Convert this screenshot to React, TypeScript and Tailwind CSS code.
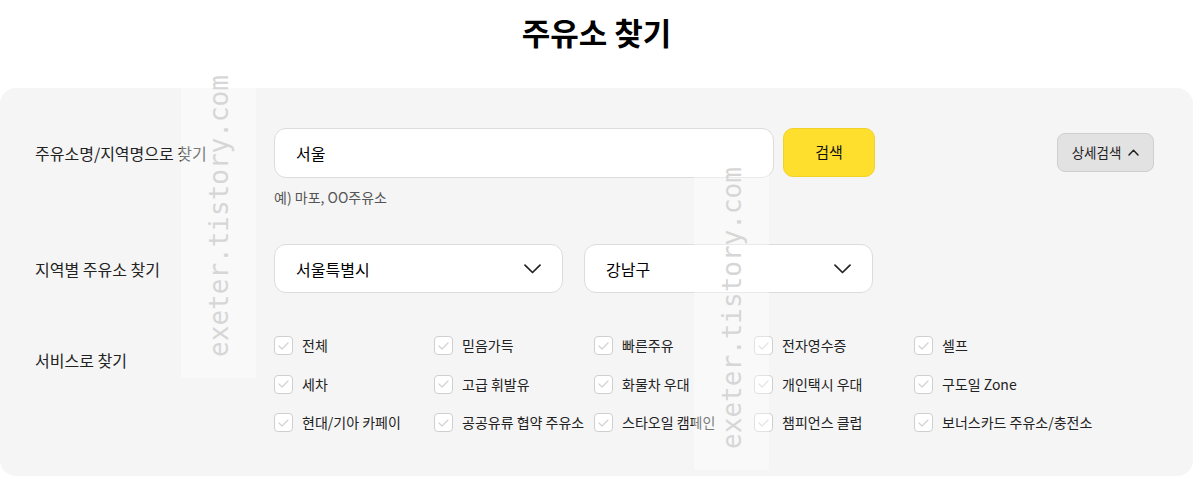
const services = [
  "전체",
  "믿음가득",
  "빠른주유",
  "전자영수증",
  "셀프",
  "세차",
  "고급 휘발유",
  "화물차 우대",
  "개인택시 우대",
  "구도일 Zone",
  "현대/기아 카페이",
  "공공유류 협약 주유소",
  "스타오일 캠페인",
  "챔피언스 클럽",
  "보너스카드 주유소/충전소",
]

function ChevronDown() {
  return (
    <svg width="17" height="10" viewBox="0 0 17 10" fill="none">
      <path d="M1 1.2 8.5 8.5 16 1.2" stroke="#222" strokeWidth="1.7" strokeLinecap="round" strokeLinejoin="round" />
    </svg>
  )
}

function Checkbox({ label }: { label: string }) {
  return (
    <label className="flex h-[19px] items-center gap-[9px]">
      <span className="flex h-[19px] w-[19px] shrink-0 items-center justify-center rounded-[4px] border border-[#cfcfcf] bg-white">
        <svg width="11" height="8" viewBox="0 0 11 8" fill="none">
          <path d="M1 4 4 7 10 1" stroke="#d2d2d2" strokeWidth="1.2" strokeLinecap="round" strokeLinejoin="round" />
        </svg>
      </span>
      <span className="whitespace-nowrap text-[14px] text-[#222]">{label}</span>
    </label>
  )
}

function Watermark({ className }: { className: string }) {
  return (
    <div
      className={`pointer-events-none absolute flex w-[75px] items-center justify-center bg-white/40 ${className}`}
    >
      <span className="-rotate-90 whitespace-nowrap font-['DejaVu_Sans_Mono',monospace] text-[26px] leading-none text-[#d6d6d6]">
        exeter.tistory.com
      </span>
    </div>
  )
}

export default function App() {
  return (
    <div className="relative min-h-[482px] w-[1203px] bg-white font-['Noto_Sans_CJK_KR','Noto_Sans',sans-serif] text-[#222]">
      <div className="mr-[10px]">
        <h1 className="pt-[13px] text-center text-[31px] font-bold leading-[38px] text-black">주유소 찾기</h1>

        <div className="mt-[37px] rounded-[16px] bg-[#f5f5f5] pb-[44px] pl-[35px] pr-[39px] pt-[40px]">
          {/* 이름 검색 */}
          <div className="flex items-start">
            <div className="flex h-[50px] w-[239px] shrink-0 items-center whitespace-nowrap text-[16px]">
              주유소명/지역명으로 찾기
            </div>
            <div>
              <div className="flex items-start gap-[9px]">
                <div className="flex h-[50px] w-[500px] items-center rounded-[12px] border border-[#dcdcdc] bg-white px-[21px] text-[16px] text-black">
                  서울
                </div>
                <button
                  type="button"
                  className="h-[49px] w-[92px] rounded-[10px] border border-[#f2d228] bg-[#ffdf2e] text-[15px] text-[#111]"
                >
                  검색
                </button>
              </div>
              <p className="mt-[9px] text-[14px] leading-[20px] text-[#555]">예) 마포, OO주유소</p>
            </div>
            <button
              type="button"
              className="ml-auto mt-[5px] flex h-[39px] w-[97px] items-center justify-center gap-[7px] rounded-[8px] border border-[#cfcfcf] bg-[#e2e2e2] text-[13.5px] text-[#222]"
            >
              상세검색
              <svg width="11" height="7" viewBox="0 0 11 7" fill="none">
                <path d="M1 6 5.5 1.2 10 6" stroke="#222" strokeWidth="1.5" strokeLinecap="round" strokeLinejoin="round" />
              </svg>
            </button>
          </div>

          {/* 지역 */}
          <div className="mt-[37px] flex items-center">
            <div className="w-[239px] shrink-0 text-[16px]">지역별 주유소 찾기</div>
            <div className="flex gap-[21px]">
              <div className="flex h-[49px] w-[289px] items-center justify-between rounded-[12px] border border-[#dcdcdc] bg-white pl-[21px] pr-[21px] text-[16px] text-black">
                서울특별시
                <ChevronDown />
              </div>
              <div className="flex h-[49px] w-[289px] items-center justify-between rounded-[12px] border border-[#dcdcdc] bg-white pl-[21px] pr-[21px] text-[16px] text-black">
                강남구
                <ChevronDown />
              </div>
            </div>
          </div>

          {/* 서비스 */}
          <div className="mt-[43px] flex items-start">
            <div className="mt-[12px] w-[239px] shrink-0 text-[16px] leading-[24px]">서비스로 찾기</div>
            <div className="grid grid-cols-[repeat(5,160px)] gap-y-[19.5px]">
              {services.map((s) => (
                <Checkbox key={s} label={s} />
              ))}
            </div>
          </div>
        </div>
      </div>

      <Watermark className="left-[181px] top-[53px] h-[325px]" />
      <Watermark className="left-[694px] top-[145px] h-[325px]" />
    </div>
  )
}
